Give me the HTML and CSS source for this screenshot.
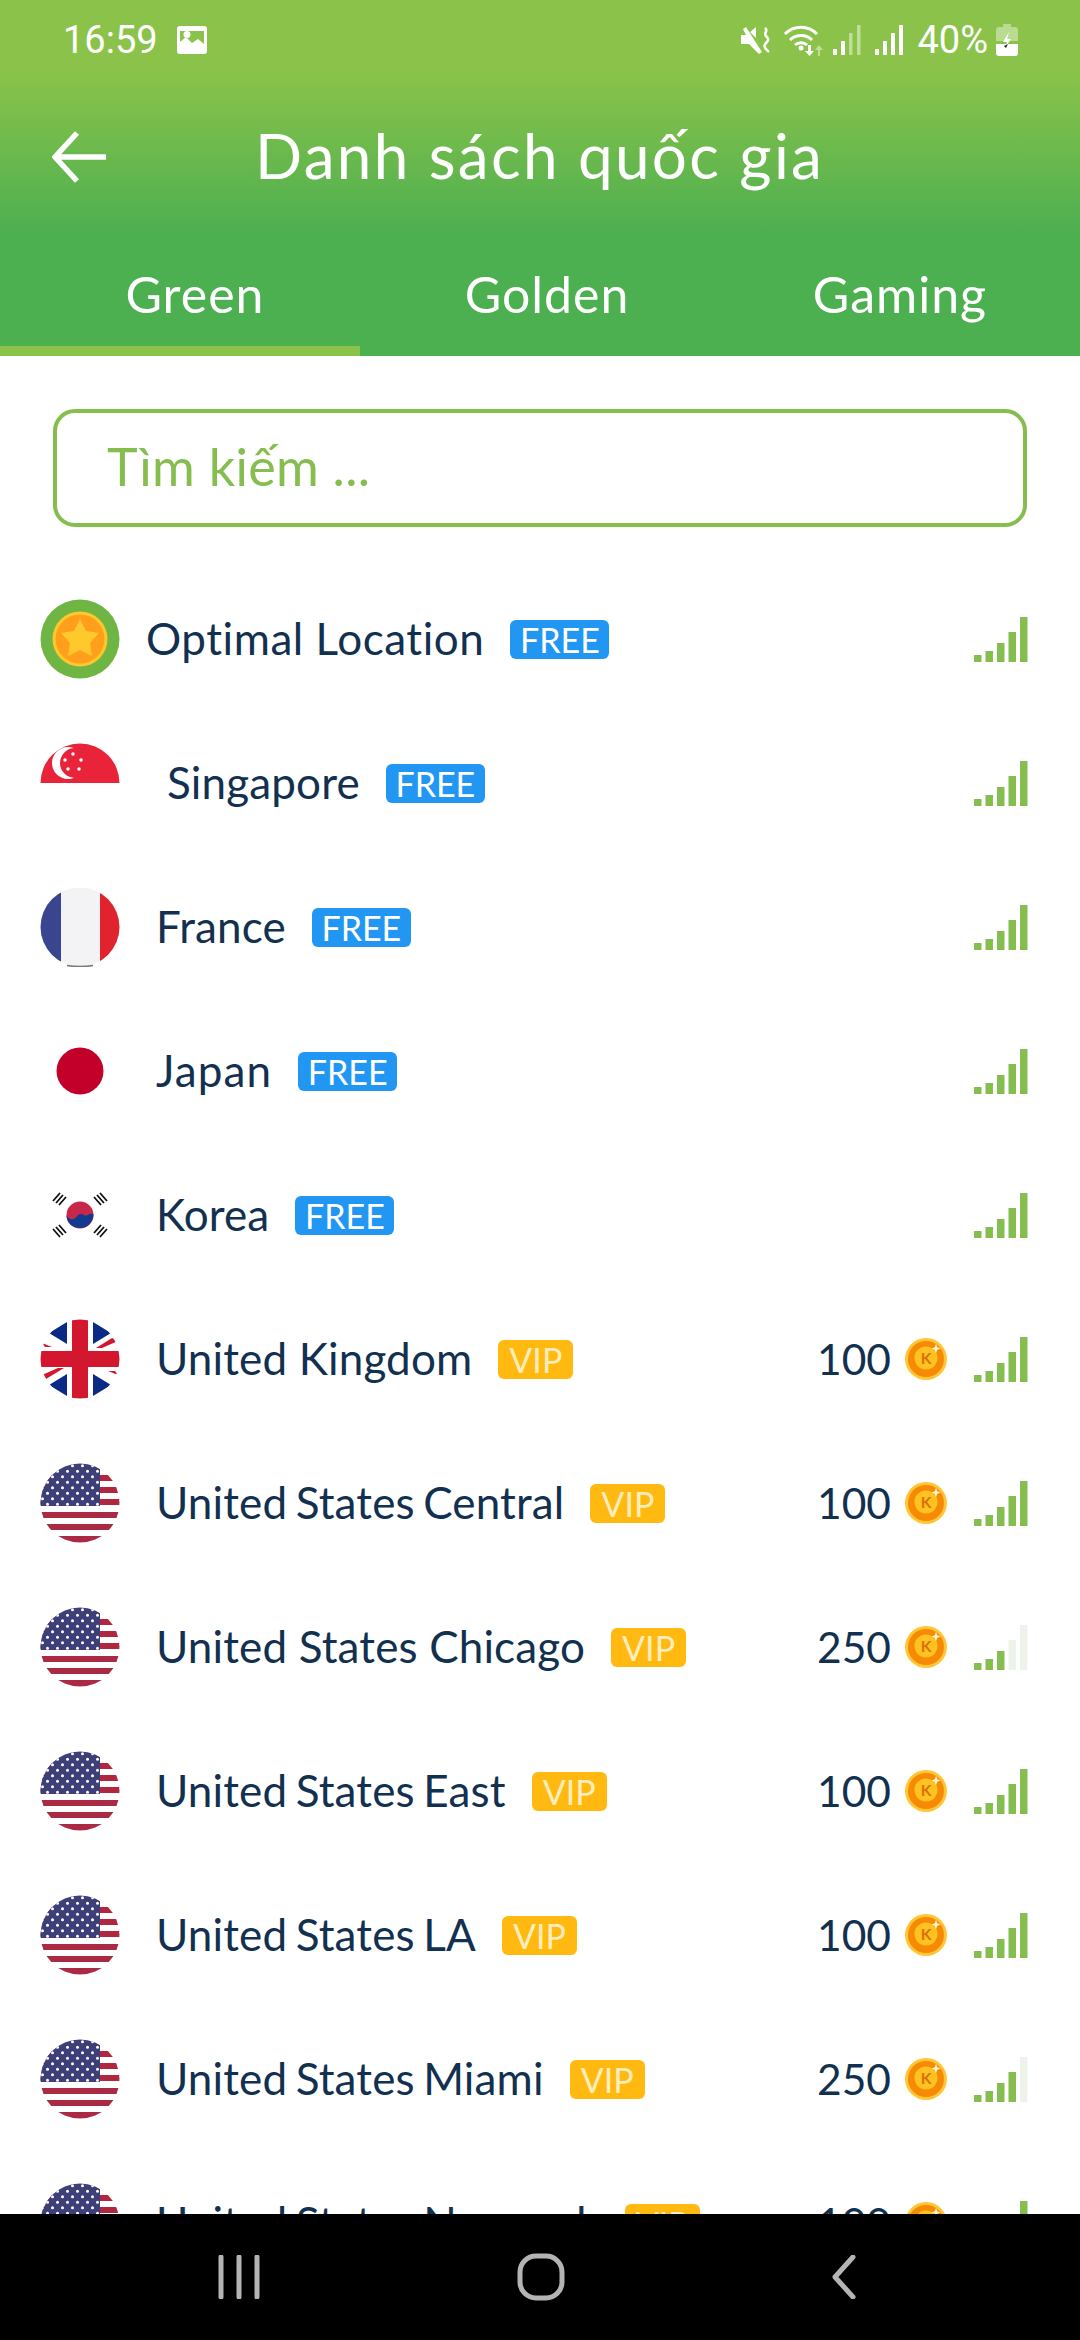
FILE: index.html
```html
<!DOCTYPE html>
<html lang="vi">
<head>
    <meta charset="UTF-8">
    <meta name="viewport" content="width=device-width, initial-scale=1.0">
    <title>Danh sách quốc gia</title>
    <link rel="stylesheet" href="styles.css">
</head>
<body>
    <svg class="defs" width="0" height="0" aria-hidden="true">
        <defs>
            <clipPath id="round"><circle cx="40" cy="40" r="39.5"/></clipPath>
            <pattern id="stars" width="10" height="11" patternUnits="userSpaceOnUse">
                <circle cx="2.500" cy="2.800" r="1.500" fill="#fff"/>
                <circle cx="7.500" cy="8.300" r="1.500" fill="#fff"/>
            </pattern>
            <symbol id="coin" viewBox="0 0 42 42">
                <circle cx="21" cy="21" r="21" fill="#ffc533"/>
                <circle cx="21" cy="21" r="18" fill="#f58a07"/>
                <circle cx="21" cy="20" r="11.500" fill="#ffc21f"/>
                <text x="21" y="25.500" text-anchor="middle" font-family="Lato, sans-serif" font-size="15.500" font-weight="700" fill="#d9720a">K</text>
                <path d="M31 6l1.300 3.200 3.200 1.300-3.200 1.300-1.300 3.200-1.300-3.200-3.200-1.300 3.200-1.300z" fill="#fff3d0"/>
            </symbol>
            <symbol id="us" viewBox="0 0 80 80">
                <g clip-path="url(#round)">
                    <rect width="80" height="80" fill="#fff"/>
                    <rect y="12" width="80" height="6" fill="#b0273f"/>
                    <rect y="24" width="80" height="6" fill="#b0273f"/>
                    <rect y="36" width="80" height="6" fill="#b0273f"/>
                    <rect y="49" width="80" height="6" fill="#a92a42"/>
                    <rect y="61" width="80" height="6" fill="#a92a42"/>
                    <rect y="73" width="80" height="7" fill="#a92a42"/>
                    <rect width="60" height="43" fill="#3d3f78"/>
                    <rect width="60" height="43" fill="url(#stars)"/>
                </g>
            </symbol>
            <symbol id="signal-bars" viewBox="0 0 54 45">
                <rect x="0" y="38" width="7.500" height="7"/>
                <rect x="11.500" y="34" width="7.500" height="11"/>
                <rect x="23" y="26" width="7.500" height="19"/>
            </symbol>
        </defs>
    </svg>

    <div class="phone">
        <header class="top">
            <div class="status">
                <div class="status-left">
                    <span class="clock">16:59</span>
                    <svg class="ic-photo" viewBox="0 0 30 28"><path fill="#fff" fill-rule="evenodd" d="M3 0h24a3 3 0 0 1 3 3v22a3 3 0 0 1-3 3H3a3 3 0 0 1-3-3V3a3 3 0 0 1 3-3zM3 5v11l6-5 6 6 6-4 6 5V5zM10 5a3.500 3.500 0 1 1 0 7 3.500 3.500 0 0 1 0-7z"/></svg>
                </div>
                <div class="status-right">
                    <svg class="ic-mute" viewBox="0 0 30 28"><path fill="#fff" d="M0 9h5L2 3l3-2 16 25-3 2-4-4-6-6H0zM9 6l6-5v11z"/><path fill="none" stroke="#fff" stroke-width="2.500" d="M24 2c4 3-2 5 1 8s3 4 0 7-1 6 3 9"/></svg>
                    <svg class="ic-wifi" viewBox="0 0 40 32"><g fill="none" stroke="#fff" stroke-width="3"><path d="M2 10c9-9 23-9 32 0"/><path d="M7 16c6-6 16-6 22 0"/><path d="M12 21c3-3 9-3 12 0"/></g><circle cx="18" cy="24" r="2.500" fill="#fff"/><path d="M25 21h3v6h3l-4.500 5-4.500-5h3z" fill="#fff"/><path d="M35 32v-6h-3l4-5 4 5h-3v6z" fill="#fff" opacity=".45"/></svg>
                    <svg class="ic-cell" viewBox="0 0 28 30"><rect x="0" y="24" width="4" height="6" fill="#fff"/><rect x="8" y="16" width="4" height="14" fill="#fff"/><rect x="16" y="8" width="3.500" height="22" fill="#fff" opacity=".45"/><rect x="24" y="0" width="3.500" height="30" fill="#fff" opacity=".45"/></svg>
                    <svg class="ic-cell" viewBox="0 0 28 30"><rect x="0" y="24" width="4" height="6" fill="#fff"/><rect x="8" y="16" width="4" height="14" fill="#fff"/><rect x="16" y="8" width="4" height="22" fill="#fff"/><rect x="24" y="0" width="4" height="30" fill="#fff"/></svg>
                    <span class="percent">40%</span>
                    <svg class="ic-battery" viewBox="0 0 22 32"><path fill="#fff" opacity=".4" d="M7 0h8v3h4a3 3 0 0 1 3 3v11H0V6a3 3 0 0 1 3-3h4z"/><path fill="#fff" d="M0 20h22v9a3 3 0 0 1-3 3H3a3 3 0 0 1-3-3z"/><path fill="#fff" d="M13 8l-6 10h4l-3 7 7-10h-4z"/><path d="M8 22l4-2-2 4z" fill="#222"/></svg>
                </div>
            </div>
            <div class="title-bar">
                <svg class="ic-back" viewBox="0 0 54 54"><path d="M25 3L3 27l22 24M3 27h51" fill="none" stroke="#fff" stroke-width="5.500"/></svg>
                <h1>Danh sách quốc gia</h1>
            </div>
            <nav class="tabs">
                <a class="tab tab-green active">Green</a>
                <a class="tab tab-golden">Golden</a>
                <a class="tab">Gaming</a>
            </nav>
        </header>

        <main class="content">
            <div class="search">Tìm kiếm ...</div>
            <ul class="list">
                <li class="row row-optimal">
                    <svg class="flag" viewBox="0 0 80 80">
                        <circle cx="40" cy="40" r="39.500" fill="#6fb544"/>
                        <circle cx="40" cy="40" r="27.500" fill="#fbc92b"/>
                        <circle cx="40" cy="40" r="24.500" fill="#ff9f1c"/>
                        <path d="M40 20l6 12 13 2-9 10 2 13-12-6-12 6 2-13-9-10 13-2z" fill="#ffc92e"/>
                    </svg>
                    <span class="name">Optimal Location</span><span class="badge free">FREE</span>
                    <span class="cost"></span>
                    <svg class="signal" viewBox="0 0 54 45"><use href="#signal-bars"/><rect x="34.500" y="15" width="7.500" height="30"/><rect x="46" y="0" width="7.500" height="45"/></svg>
                </li>
                <li class="row row-sg">
                    <svg class="flag" viewBox="0 0 80 80">
                        <path d="M0.500 40a39.500 39.500 0 0 1 79 0z" fill="#e8233a"/>
                        <circle cx="28" cy="20" r="16" fill="#fff"/>
                        <circle cx="35" cy="20" r="15" fill="#e8233a"/>
                        <path d="M33 11h0M25 17h0M41 17h0M28 26h0M39 26h0" stroke="#fff" stroke-width="3.500" stroke-linecap="round"/>
                    </svg>
                    <span class="name">Singapore</span><span class="badge free">FREE</span>
                    <span class="cost"></span>
                    <svg class="signal" viewBox="0 0 54 45"><use href="#signal-bars"/><rect x="34.500" y="15" width="7.500" height="30"/><rect x="46" y="0" width="7.500" height="45"/></svg>
                </li>
                <li class="row">
                    <svg class="flag" viewBox="0 0 80 80">
                        <g clip-path="url(#round)">
                            <rect width="80" height="80" fill="#f3f3f5"/>
                            <rect width="21" height="80" fill="#39468f"/>
                            <rect x="60" width="20" height="80" fill="#e1232e"/>
                        </g>
                        <path d="M27 78.500q13 2 26 0" fill="none" stroke="#777" stroke-width="1.500"/>
                    </svg>
                    <span class="name">France</span><span class="badge free">FREE</span>
                    <span class="cost"></span>
                    <svg class="signal" viewBox="0 0 54 45"><use href="#signal-bars"/><rect x="34.500" y="15" width="7.500" height="30"/><rect x="46" y="0" width="7.500" height="45"/></svg>
                </li>
                <li class="row row-japan">
                    <svg class="flag" viewBox="0 0 80 80"><circle cx="40" cy="40" r="23.500" fill="#c20029"/></svg>
                    <span class="name">Japan</span><span class="badge free">FREE</span>
                    <span class="cost"></span>
                    <svg class="signal" viewBox="0 0 54 45"><use href="#signal-bars"/><rect x="34.500" y="15" width="7.500" height="30"/><rect x="46" y="0" width="7.500" height="45"/></svg>
                </li>
                <li class="row">
                    <svg class="flag" viewBox="0 0 80 80">
                        <circle cx="40" cy="40" r="13.500" fill="#c8274a"/>
                        <path d="M26.500 40c1 3 4 5 7 4s4-5 7-5 5 3 7 1 5-1 6-1c0 8-6 14-13.500 14S26.500 48 26.500 40z" fill="#123b8f"/>
                        <g stroke="#111" stroke-width="1.800">
                            <path d="M20 18l-7 8M23 20l-7 8M26 22l-7 8"/>
                            <path d="M60 18l7 8M57 20l7 8M54 22l7 8"/>
                            <path d="M20 62l-7-8M23 60l-7-8M26 58l-7-8"/>
                            <path d="M60 62l7-8M57 60l7-8M54 58l7-8"/>
                        </g>
                    </svg>
                    <span class="name">Korea</span><span class="badge free">FREE</span>
                    <span class="cost"></span>
                    <svg class="signal" viewBox="0 0 54 45"><use href="#signal-bars"/><rect x="34.500" y="15" width="7.500" height="30"/><rect x="46" y="0" width="7.500" height="45"/></svg>
                </li>
                <li class="row">
                    <svg class="flag" viewBox="0 0 80 80">
                        <g clip-path="url(#round)">
                            <rect width="80" height="80" fill="#fff"/>
                            <path d="M27 3v22L9 14zM53 3v22l18-11zM27 77V55L9 66zM53 77V55l18 11z" fill="#0a2a86"/>
                            <path d="M2 24l10 4H5zM78 22l-16 7h-6l16-10zM2 56l16-7h6L6 60zM78 56l-10-4h7z" fill="#d3172f"/>
                            <rect x="32" width="16" height="80" fill="#d3172f"/>
                            <rect y="32" width="80" height="16" fill="#d3172f"/>
                        </g>
                    </svg>
                    <span class="name">United Kingdom</span><span class="badge vip">VIP</span>
                    <span class="cost">100<svg class="coin"><use href="#coin"/></svg></span>
                    <svg class="signal" viewBox="0 0 54 45"><use href="#signal-bars"/><rect x="34.500" y="15" width="7.500" height="30"/><rect x="46" y="0" width="7.500" height="45"/></svg>
                </li>
                <li class="row row-us">
                    <svg class="flag"><use href="#us"/></svg>
                    <span class="name">United States Central</span><span class="badge vip">VIP</span>
                    <span class="cost">100<svg class="coin"><use href="#coin"/></svg></span>
                    <svg class="signal" viewBox="0 0 54 45"><use href="#signal-bars"/><rect x="34.500" y="15" width="7.500" height="30"/><rect x="46" y="0" width="7.500" height="45"/></svg>
                </li>
                <li class="row">
                    <svg class="flag"><use href="#us"/></svg>
                    <span class="name">United States Chicago</span><span class="badge vip">VIP</span>
                    <span class="cost">250<svg class="coin"><use href="#coin"/></svg></span>
                    <svg class="signal" viewBox="0 0 54 45"><use href="#signal-bars"/><rect class="off" x="34.500" y="15" width="7.500" height="30"/><rect class="off" x="46" y="0" width="7.500" height="45"/></svg>
                </li>
                <li class="row row-us">
                    <svg class="flag"><use href="#us"/></svg>
                    <span class="name">United States East</span><span class="badge vip">VIP</span>
                    <span class="cost">100<svg class="coin"><use href="#coin"/></svg></span>
                    <svg class="signal" viewBox="0 0 54 45"><use href="#signal-bars"/><rect x="34.500" y="15" width="7.500" height="30"/><rect x="46" y="0" width="7.500" height="45"/></svg>
                </li>
                <li class="row row-us">
                    <svg class="flag"><use href="#us"/></svg>
                    <span class="name">United States LA</span><span class="badge vip">VIP</span>
                    <span class="cost">100<svg class="coin"><use href="#coin"/></svg></span>
                    <svg class="signal" viewBox="0 0 54 45"><use href="#signal-bars"/><rect x="34.500" y="15" width="7.500" height="30"/><rect x="46" y="0" width="7.500" height="45"/></svg>
                </li>
                <li class="row row-us">
                    <svg class="flag"><use href="#us"/></svg>
                    <span class="name">United States Miami</span><span class="badge vip">VIP</span>
                    <span class="cost">250<svg class="coin"><use href="#coin"/></svg></span>
                    <svg class="signal" viewBox="0 0 54 45"><use href="#signal-bars"/><rect x="34.500" y="15" width="7.500" height="30"/><rect class="off" x="46" y="0" width="7.500" height="45"/></svg>
                </li>
                <li class="row row-us">
                    <svg class="flag"><use href="#us"/></svg>
                    <span class="name">United States N<span class="spaced">ewar</span>k</span><span class="badge vip">VIP</span>
                    <span class="cost">100<svg class="coin"><use href="#coin"/></svg></span>
                    <svg class="signal" viewBox="0 0 54 45"><use href="#signal-bars"/><rect x="34.500" y="15" width="7.500" height="30"/><rect x="46" y="0" width="7.500" height="45"/></svg>
                </li>
            </ul>
        </main>

        <footer class="navbar">
            <svg class="ic-recent" viewBox="0 0 44 44"><path d="M3 2v40M21 2v40M39 2v40" stroke="#b4b4b4" stroke-width="5" stroke-linecap="round"/></svg>
            <svg class="ic-home" viewBox="0 0 48 48"><rect x="3" y="3" width="42" height="42" rx="16" fill="none" stroke="#b4b4b4" stroke-width="5"/></svg>
            <svg class="ic-nav-back" viewBox="0 0 26 44"><path d="M22 2L4 22l18 20" fill="none" stroke="#b4b4b4" stroke-width="5" stroke-linecap="round" stroke-linejoin="round"/></svg>
        </footer>
    </div>
</body>
</html>
```

FILE: styles.css
```css
* {
    box-sizing: border-box;
}
html, body {
    margin: 0;
    padding: 0;
}
body {
    width: 1080px;
    height: 2340px;
    overflow: hidden;
    background-color: #fff;
    font-family: "Lato", "Noto Sans", sans-serif;
    color: #12304f;
}
.defs {
    display: block;
    height: 0;
}
.phone {
    display: flex;
    flex-direction: column;
    height: 2340px;
}

/* header */
.top {
    flex: none;
    height: 356px;
    color: #fff;
    background: linear-gradient(180deg, #8bc34a 0, #8bc34a 70px, #4caf50 235px, #4caf50 100%);
}
.status {
    display: flex;
    justify-content: space-between;
    align-items: center;
    height: 56px;
    margin-top: 12px;
    padding: 0 62px 0 63px;
}
.status-left, .status-right {
    display: flex;
    align-items: center;
}
.clock, .percent {
    font-family: "Roboto", sans-serif;
    font-size: 38px;
    line-height: 1;
}
.ic-photo {
    width: 30px;
    height: 28px;
    margin-left: 19px;
}
.ic-mute {
    width: 30px;
    height: 28px;
}
.ic-wifi {
    width: 40px;
    height: 32px;
    margin-left: 12px;
}
.ic-cell {
    width: 28px;
    height: 30px;
    margin-left: 10px;
}
.ic-cell + .ic-cell {
    margin-left: 14px;
}
.percent {
    margin-left: 14px;
}
.ic-battery {
    width: 22px;
    height: 32px;
    margin-left: 8px;
}
.title-bar {
    display: flex;
    align-items: center;
    height: 96px;
    margin-top: 41px;
    padding-left: 52px;
}
.ic-back {
    width: 54px;
    height: 54px;
    flex: none;
}
h1 {
    margin: 0 0 4px 149px;
    font-size: 62px;
    font-weight: 400;
    letter-spacing: 2.300px;
    line-height: 1;
    white-space: nowrap;
}
.tabs {
    display: grid;
    grid-template-columns: repeat(3, 1fr);
    height: 151px;
}
.tab {
    padding-top: 59px;
    text-align: center;
    font-size: 50px;
    letter-spacing: 1px;
    line-height: 60px;
    border-bottom: 10px solid transparent;
}
.tab-green {
    padding-left: 30px;
}
.tab-golden {
    padding-left: 14px;
}
.tab.active {
    border-bottom-color: #8bc34a;
}

/* search box */
.content {
    flex: 1;
    min-height: 0;
    overflow: hidden;
    padding-top: 53px;
}
.search {
    height: 118px;
    margin: 0 53px;
    padding-left: 50px;
    border: 4px solid #85bd4f;
    border-radius: 22px;
    font-size: 52px;
    letter-spacing: .3px;
    line-height: 106px;
    color: #85bd4f;
}

/* country list */
.list {
    margin: 40px 0 0;
    padding: 0;
    list-style: none;
}
.row {
    display: flex;
    align-items: center;
    height: 144px;
    padding: 0 52px 0 40px;
}
.flag {
    flex: none;
    width: 80px;
    height: 80px;
    margin-right: 36px;
}
.row-optimal .flag {
    margin-right: 26px;
}
.row-sg .flag {
    margin-right: 47px;
}
.name {
    margin-bottom: 2px;
    font-size: 44px;
    letter-spacing: .15px;
    line-height: 60px;
    white-space: nowrap;
}
.row-optimal .name {
    letter-spacing: .55px;
}
.row-japan .name {
    letter-spacing: 1.100px;
}
.row-us .name {
    word-spacing: -3px;
}
.spaced {
    letter-spacing: 6px;
}
.badge {
    flex: none;
    height: 39px;
    margin-left: 26px;
    border-radius: 6px;
    text-align: center;
    font-size: 34px;
    line-height: 39px;
}
.free {
    width: 99px;
    color: #fff;
    background-color: #2196f3;
}
.vip {
    width: 75px;
    color: #ffeebb;
    background-color: #ffb911;
}
.cost {
    display: flex;
    align-items: center;
    margin-left: auto;
    font-size: 42.5px;
    line-height: 60px;
}
.coin {
    width: 42px;
    height: 42px;
    margin-left: 14px;
}
.signal {
    flex: none;
    width: 54px;
    height: 45px;
    margin: 0 0 0 27px;
    fill: #85bd4e;
}
.signal .off {
    fill: #eef3ea;
}

/* android navigation */
.navbar {
    flex: none;
    display: flex;
    align-items: center;
    height: 126px;
    background-color: #000;
    padding-left: 218px;
}
.ic-recent {
    width: 44px;
    height: 44px;
}
.ic-home {
    width: 48px;
    height: 48px;
    margin-left: 255px;
}
.ic-nav-back {
    width: 26px;
    height: 44px;
    margin-left: 266px;
}
```
